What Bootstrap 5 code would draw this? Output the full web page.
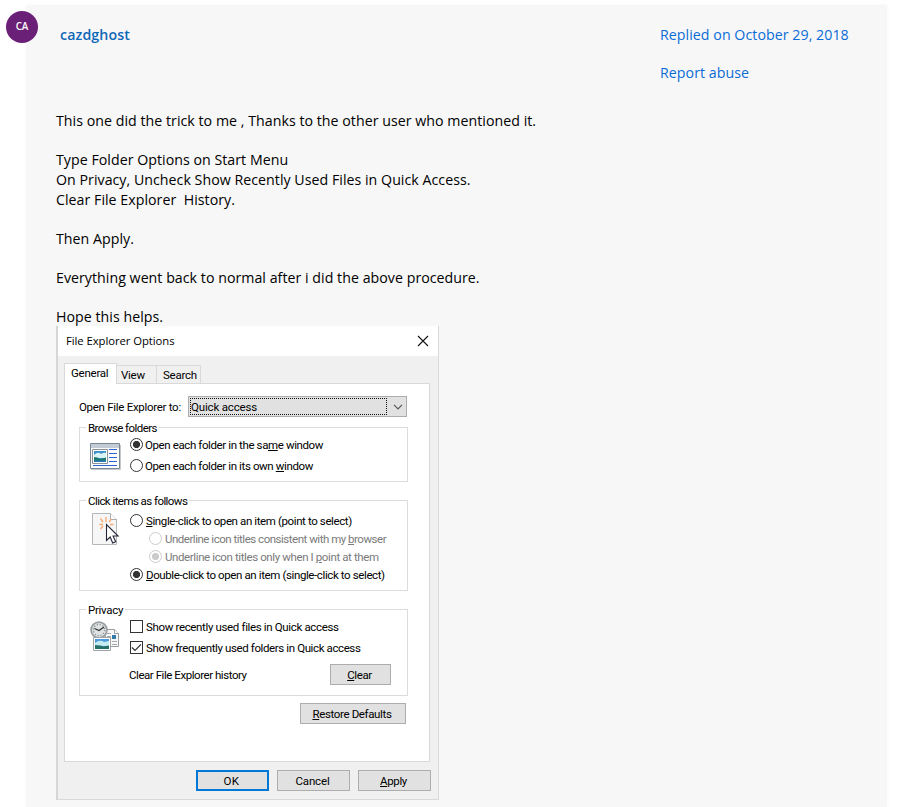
<!DOCTYPE html>
<html lang="en">
<head>
<meta charset="utf-8">
<meta name="viewport" content="width=device-width, initial-scale=1">
<title>Forum reply</title>
<link href="https://cdn.jsdelivr.net/npm/bootstrap@5.3.0/dist/css/bootstrap.min.css" rel="stylesheet">
<style>
body{background:#fff;font:14.2px/20px "Open Sans","Noto Sans",sans-serif;color:#000}
.reply{padding:5px 22px 0 6px;height:807px}
.avatar-dot{width:32px;height:32px;margin-top:6px;margin-right:-12px;background:#6b2077;color:#fff;font-size:9.8px;font-weight:600;z-index:1}
.panel-body{background:#f7f7f7;box-shadow:0 0 5px rgba(0,0,0,.035);padding:20px 38px 0 30px}
.user{color:#0f68b8;font-weight:600;margin-left:4px;letter-spacing:.11px;text-decoration:none}
.meta{width:189px;color:#0a6cd6;gap:18px;letter-spacing:.05px}
.meta a{color:inherit;text-decoration:none;white-space:nowrap}
.post{margin-top:28px;letter-spacing:.03px}
.post p{margin:0 0 19px;white-space:pre;line-height:20px}
.post p:last-child{margin:0}
.dlg{width:383px;height:474px;margin-top:-1px;background:#f0f0f0;border:1px solid #d9d9d9;border-left:2px solid #d6d6d6;border-top:0;font:11.5px/14px Roboto,"Liberation Sans",sans-serif;letter-spacing:-.39px;white-space:nowrap}
.dlg u{text-underline-offset:1px;text-decoration-thickness:1px}
.title-strip{height:30px;background:#fff;padding:0 9px 1px 8px;font-family:"Open Sans",sans-serif;font-size:11.3px;letter-spacing:-.06px}
.tabs3{height:28px;padding-left:6px;margin-bottom:-1px;z-index:1;letter-spacing:-.25px}
.tabs3 div{border:1px solid #d9d9d9;height:19px;padding-left:4px;line-height:18px;background:#f0f0f0}
.tabs3 .on{background:#fff;height:21px;width:53px;border-bottom:0;padding-left:6px;line-height:19px}
.tabs3 .t2{width:41px;margin-left:-1px}
.tabs3 .t3{width:45px;margin-left:-1px;padding-left:6px}
.sheet{width:366px;height:379px;margin-left:6px;background:#fff;border:1px solid #d9d9d9;padding:12px 21px 0 14px}
.combo{width:219px;height:21px;margin-right:1px;background:#e1e1e1;border:1px solid #adadad;padding:1px 3px 1px 1px;letter-spacing:-.17px}
.focus-dots{width:197px;height:17px;border:1px dotted #111;line-height:17px}
.grp{position:relative;border:1px solid #dcdcdc;width:329px;padding-left:10px}
.grp .lgd{position:absolute;left:6px;top:-7px;background:#fff;padding:0 2px;line-height:15px}
.pic{width:40px;flex:none}
.g1{height:55px;margin-top:10px;padding-top:8px}.g2{height:91px;margin-top:18px;padding-top:11px}.g3{height:87px;margin-top:18px;padding-top:8px}
.g1 .pic{padding-top:7px}.g2 .pic{padding:1px 0 0 2px}.g3 .pic{padding-top:3px}
.opts{gap:4px}
.g2 .opts{gap:1px}
.opt{height:17px;gap:3px}
.g1 .opt{gap:2px}
.opt.sub{margin-left:19px;color:#7a7a7a}
.rad{width:13px;height:13px;border:1px solid #333;border-radius:50%;background:#fff}
.rad.sel{background:radial-gradient(circle,#333 0 3.2px,#fff 4px)}
.sub .rad{border-color:#ccc}
.sub .rad.sel{background:radial-gradient(circle,#ccc 0 3.2px,#fff 4px)}
.chk{width:13px;height:13px;border:1px solid #333;background:#fff}
.hist{margin:4px 16px 0 -1px}
.wbtn{border:1px solid #adadad;border-radius:0;background:#e1e1e1;height:21px;padding:1px 2px 0 0;font-size:11.5px;line-height:19px;color:#000;letter-spacing:-.36px}
.wbtn.def{border:2px solid #0078d7;line-height:17px;letter-spacing:.4px}
.w73{width:73px}.w61{width:61px}.w106{width:106px;margin:7px 2px 0 0}
.foot{padding:8px 7px 0 0;gap:8px}
.k16{letter-spacing:-.16px}.k29{letter-spacing:-.29px}.k33{letter-spacing:-.35px}.k43{letter-spacing:-.45px}.k47{letter-spacing:-.485px}.k51{letter-spacing:-.56px}
svg{display:block;flex:none}
</style>
<script src="https://cdn.jsdelivr.net/npm/bootstrap@5.3.0/dist/js/bootstrap.bundle.min.js"></script>
</head>
<body>
<article class="reply d-flex align-items-start">
  <div class="avatar-dot rounded-circle d-flex align-items-center justify-content-center flex-shrink-0">CA</div>
  <div class="panel-body flex-grow-1 h-100">
    <header class="d-flex justify-content-between">
      <a class="user" href="#">cazdghost</a>
      <div class="meta d-flex flex-column"><a href="#">Replied on October 29, 2018</a><a href="#">Report abuse</a></div>
    </header>
    <div class="post">
      <p>This one did the trick to me , Thanks to the other user who mentioned it.</p>
      <p>Type Folder Options on Start Menu
On Privacy, Uncheck Show Recently Used Files in Quick Access.
Clear File Explorer  History.</p>
      <p>Then Apply.</p>
      <p>Everything went back to normal after i did the above procedure.</p>
      <p>Hope this helps.</p>
    </div>
    <section class="dlg">
      <div class="title-strip d-flex align-items-center justify-content-between"><span>File Explorer Options</span>
        <svg width="12" height="12" viewBox="0 0 12 12"><path d="M1 1 11 11M11 1 1 11" stroke="#111" stroke-width="1.1"/></svg></div>
      <div class="tabs3 d-flex align-items-end position-relative"><div class="on">General</div><div class="t2">View</div><div class="t3">Search</div></div>
      <div class="sheet">
        <div class="d-flex align-items-center justify-content-between"><span class="k29" style="">Open File Explorer to:</span>
          <div class="combo d-flex align-items-center justify-content-between"><div class="focus-dots">Quick access</div>
          <svg width="10" height="6" viewBox="0 0 10 6"><path d="M1 .8 5 4.800 9 .8" fill="none" stroke="#555" stroke-width="1.200"/></svg></div></div>
        <div class="grp g1 d-flex align-items-start"><span class="lgd k51">Browse folders</span>
          <div class="pic"><svg width="31" height="28" viewBox="0 0 31 28"><path d="M.5.5h29v25h-29z" fill="#fafbfc" stroke="#7c8794"/><path d="M1 26.500h29.500V2" fill="none" stroke="#c3c8cc"/><path d="M1 1h28v4H1z" fill="#c3ccd6"/><path d="M2.500 6.500h15v14h-15z" fill="#fff" stroke="#8b9297"/><path d="M4 8h12v11H4z" fill="#3f8fca"/><path d="M4 12q4-4 7-1 3-2 5-1v5H4z" fill="#d9f4f5"/><path d="M4 14q4 0 6 2l6-1.500V19H4z" fill="#1d7a6c"/><path d="M4 17.500h12V19H4z" fill="#2879b8"/><path d="M19 6.500h8M19 10.500h8M19 14.500h8M19 18.500h8M3 22.500h24" fill="none" stroke="#2f62d0"/></svg></div>
          <div class="opts d-flex flex-column">
            <div class="opt d-flex align-items-center"><i class="rad sel"></i><span>Open each folder in the sa<u>m</u>e window</span></div>
            <div class="opt d-flex align-items-center"><i class="rad"></i><span>Open each folder in its own <u>w</u>indow</span></div>
          </div>
        </div>
        <div class="grp g2 d-flex align-items-start"><span class="lgd k51">Click items as follows</span>
          <div class="pic"><svg width="28" height="33" viewBox="0 0 28 33"><path d="M.5.5h18l6 6v25H.5z" fill="#f6f6f6" stroke="#b5b8ba"/><path d="M18.500.5v6h6" fill="#fff" stroke="#a9adb0"/><path d="M14 9V4M11 9 8.500 5.500M17 9l2.500-3M11 11.500H7.500M18 11.500h3.500M11 13l-2.500 3" fill="none" stroke="#f6a873" stroke-width="1.300"/><path d="M14.500 11.500v16l3.700-3.500 2.500 6 3-1.300-2.600-5.700h5z" fill="#fff" stroke="#23263a" stroke-width="1.100"/></svg></div>
          <div class="opts d-flex flex-column">
            <div class="opt d-flex align-items-center"><i class="rad"></i><span><u>S</u>ingle-click to open an item (point to select)</span></div>
            <div class="opt sub d-flex align-items-center"><i class="rad"></i><span class="k47">Underline icon titles consistent with my <u>b</u>rowser</span></div>
            <div class="opt sub d-flex align-items-center"><i class="rad sel"></i><span>Underline icon titles only when I <u>p</u>oint at them</span></div>
            <div class="opt d-flex align-items-center"><i class="rad sel"></i><span><u>D</u>ouble-click to open an item (single-click to select)</span></div>
          </div>
        </div>
        <div class="grp g3 d-flex align-items-start"><span class="lgd k29">Privacy</span>
          <div class="pic"><svg width="30" height="32" viewBox="0 0 30 32"><path d="M15.500 8.500h9l4 4v13h-13z" fill="#f7f7f7" stroke="#9b9fa3"/><path d="M24.500 8.500v4h4" fill="#fff" stroke="#9b9fa3"/><path d="M17 12.500h4M17 15.500h4M22 20.500h5M22 23.500h5" stroke="#a5aaaf"/><path d="M22 14h4v4h-4z" fill="#337aab"/><circle cx="9" cy="9" r="7.900" fill="#dfe2e3" stroke="#9a9fa2" stroke-width="1.800"/><circle cx="9" cy="9" r="5.600" fill="none" stroke="#8d9295" stroke-width="1.300" stroke-dasharray="1.200 1.730"/><path d="M4.500 7.500 9 9.500 14 6" fill="none" stroke="#333" stroke-width="1.300"/><path d="M3.500 16.500h17v13h-17z" fill="#fff" stroke="#a1a4a7"/><path d="M5 18h14v10H5z" fill="#4b9bdc"/><path d="M5 22q5-4 9-1l5-1v5H5z" fill="#c4eaf2"/><path d="M5 24q6 0 8 1.500l6-1V28H5z" fill="#267069"/></svg></div>
          <div class="opts d-flex flex-column flex-grow-1">
            <div class="opt d-flex align-items-center k33"><i class="chk"></i><span>Show recently used files in Quick access</span></div>
            <div class="opt d-flex align-items-center"><i class="chk"><svg width="11" height="11" viewBox="0 0 11 11"><path d="M1 5.500 4 8.500 10 2.300" fill="none" stroke="#333" stroke-width="1.200"/></svg></i><span>Show frequently used folders in Quick access</span></div>
            <div class="hist d-flex align-items-center justify-content-between"><span class="k43">Clear File Explorer history</span><button class="btn wbtn w61"><u>C</u>lear</button></div>
          </div>
        </div>
        <div class="d-flex justify-content-end"><button class="btn wbtn w106"><u>R</u>estore Defaults</button></div>
      </div>
      <div class="foot d-flex justify-content-end"><button class="btn wbtn def w73">OK</button><button class="btn wbtn w73 k16">Cancel</button><button class="btn wbtn w73"><u>A</u>pply</button></div>
    </section>
  </div>
</article>
</body>
</html>
